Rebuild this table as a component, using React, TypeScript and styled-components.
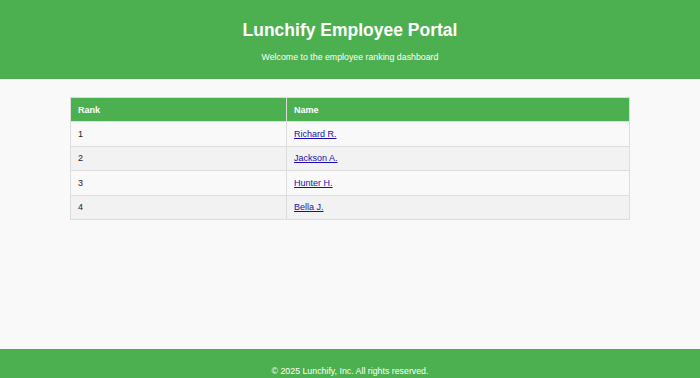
import React from "react";
import styled, { createGlobalStyle } from "styled-components";

const Global = createGlobalStyle`
  html, body { margin: 0; padding: 0; }
  body {
    background: #f9f9f9;
    font-family: "Liberation Sans", Arial, sans-serif;
    color: #333;
  }
`;

const Header = styled.header`
  background: #4caf50;
  color: #fff;
  height: 79px;
  display: flex;
  flex-direction: column;
  align-items: center;
  box-sizing: border-box;
  padding-top: 19px;
`;

const Title = styled.h1`
  margin: 0;
  font-size: 17.5px;
  font-weight: bold;
  line-height: 22px;
`;

const Subtitle = styled.p`
  margin: 11px 0 0;
  font-size: 8.8px;
  line-height: 11px;
`;

const Main = styled.main`
  height: 270px;
  box-sizing: border-box;
  padding-top: 18px;
  display: flex;
  justify-content: center;
`;

const Table = styled.table`
  width: 560px;
  border-collapse: collapse;
  font-size: 9px;
  align-self: flex-start;
`;

const HeadCell = styled.th<{ $w?: string }>`
  background: #4caf50;
  color: #fff;
  text-align: left;
  font-weight: bold;
  padding: 6px 7px;
  height: 24px;
  box-sizing: border-box;
  border: 1px solid #ddd;
  width: ${(p) => p.$w ?? "auto"};
`;

const Row = styled.tr<{ $alt: boolean }>`
  background: ${(p) => (p.$alt ? "#f2f2f2" : "#f9f9f9")};
`;

const Cell = styled.td`
  padding: 6px 7px;
  height: 24.5px;
  box-sizing: border-box;
  border: 1px solid #ddd;
  color: #222;
`;

const NameLink = styled.a`
  color: #1a0dab;
  text-decoration: underline;
`;

const Footer = styled.footer`
  background: #4caf50;
  color: #fff;
  text-align: center;
  font-size: 8.8px;
  padding: 17px 0 16px;
  line-height: 11px;
`;

const employees = [
  { rank: 1, name: "Richard R." },
  { rank: 2, name: "Jackson A." },
  { rank: 3, name: "Hunter H." },
  { rank: 4, name: "Bella J." },
];

export default function App() {
  return (
    <>
      <Global />
      <Header>
        <Title>Lunchify Employee Portal</Title>
        <Subtitle>Welcome to the employee ranking dashboard</Subtitle>
      </Header>
      <Main>
        <Table>
          <thead>
            <tr>
              <HeadCell $w="216px">Rank</HeadCell>
              <HeadCell>Name</HeadCell>
            </tr>
          </thead>
          <tbody>
            {employees.map((e, i) => (
              <Row key={e.rank} $alt={i % 2 === 1}>
                <Cell>{e.rank}</Cell>
                <Cell>
                  <NameLink href="#">{e.name}</NameLink>
                </Cell>
              </Row>
            ))}
          </tbody>
        </Table>
      </Main>
      <Footer>© 2025 Lunchify, Inc. All rights reserved.</Footer>
    </>
  );
}
